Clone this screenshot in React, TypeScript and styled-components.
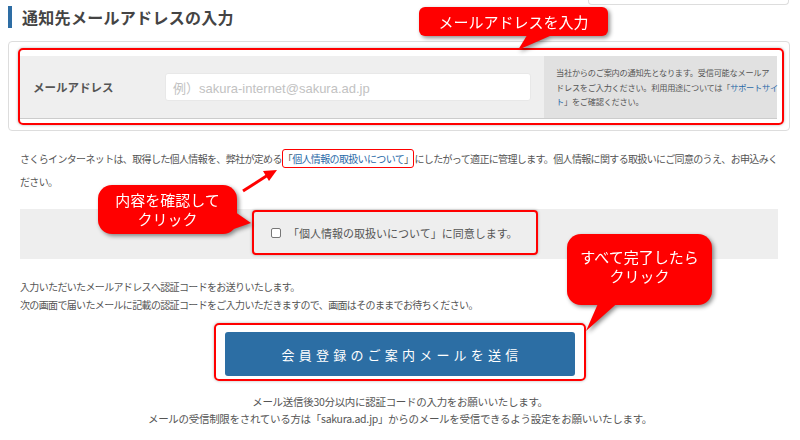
import styled, { createGlobalStyle } from "styled-components";

const GlobalStyle = createGlobalStyle`
  body {
    margin: 0;
    background: #fff;
    font-family: "Noto Sans CJK JP", "Liberation Sans", sans-serif;
    color: #555;
  }
`;

const Page = styled.div`
  position: relative;
  width: 800px;
  height: 440px;
  overflow: hidden;
`;

const PrevCard = styled.div`
  margin-left: 588px;
  width: 201px;
  height: 5px;
  box-sizing: border-box;
  border: 1px solid #ddd;
  border-top: none;
  border-radius: 0 0 4px 4px;
`;

const TitleRow = styled.div`
  display: flex;
  align-items: center;
  height: 22px;
  margin: 1px 0 0 8px;
`;

const TitleBar = styled.div`
  width: 4px;
  height: 22px;
  background: #2e6da4;
`;

const Title = styled.h2`
  margin: 0 0 0 10px;
  font-size: 16px;
  font-weight: 700;
  letter-spacing: 0.3px;
  color: #444;
`;

const FormCard = styled.div`
  margin: 13px 10px 0 8px;
  border: 1px solid #ddd;
  border-radius: 4px;
  padding: 6px 5px 5px 9px;
`;

const Highlight = styled.div`
  border: 2px solid #f00;
  border-radius: 5px;
  box-shadow: 0 0 3px rgba(0, 0, 0, 0.3);
`;

const FormHighlight = styled(Highlight)`
  padding: 6px 5px 4px 0;
`;

const FieldRow = styled.div`
  display: flex;
  height: 63px;
  box-sizing: border-box;
  background: #efefef;
  border-bottom: 1px solid #ccc;
`;

const FieldLabel = styled.div`
  flex: 0 0 145px;
  box-sizing: border-box;
  padding-left: 13px;
  display: flex;
  align-items: center;
  font-size: 11.5px;
  font-weight: 700;
  color: #555;
`;

const FieldInput = styled.div`
  flex: 0 0 auto;
  display: flex;
  align-items: center;
  margin-right: 13px;
`;

const InputBox = styled.div`
  width: 366px;
  height: 28px;
  box-sizing: border-box;
  background: #fff;
  border-radius: 3px;
  border: 1px solid #e8e8e8;
  padding-left: 7px;
  display: flex;
  align-items: center;
  font-family: "Liberation Sans", "Noto Sans CJK JP", sans-serif;
  font-size: 13px;
  color: #c2c2c2;
`;

const NoteCell = styled.div`
  flex: 1;
  min-width: 0;
  background: #e1e1e1;
  padding-left: 12px;
  display: flex;
  align-items: center;
  font-size: 8.2px;
  line-height: 14.5px;
  letter-spacing: -0.25px;
  color: #555;
  white-space: nowrap;
`;

const Link = styled.span`
  color: #2a6aa8;
`;

const Paragraph = styled.p<{ $top: number; $lh: number }>`
  margin: ${p => p.$top}px 0 0 20px;
  font-size: 10px;
  letter-spacing: -0.65px;
  line-height: ${p => p.$lh}px;
  white-space: nowrap;
  color: #555;
`;

const LinkBox = styled.span`
  border: 1.5px solid #f00;
  border-radius: 3px;
  padding: 1px 0;
`;

const AgreeBand = styled.div`
  margin: 16px 22px 0 20px;
  height: 50px;
  box-sizing: border-box;
  background: #eee;
  display: flex;
  justify-content: center;
  align-items: flex-start;
  padding: 1px 8px 0 0;
`;

const AgreeBox = styled(Highlight)`
  width: 286px;
  height: 45px;
  box-sizing: border-box;
  border-radius: 4px;
  display: flex;
  align-items: center;
  gap: 7px;
  padding-left: 17px;
  font-size: 11px;
  color: #555;
`;

const CheckBox = styled.span`
  width: 10px;
  height: 10px;
  box-sizing: border-box;
  border: 1px solid #777;
  border-radius: 2px;
  background: #fff;
`;

const ButtonHighlight = styled(Highlight)`
  width: 372px;
  height: 58px;
  box-sizing: border-box;
  margin: 9px auto 0 auto;
  padding: 7px 9px 3px 9px;
`;

const SendButton = styled.button`
  width: 350px;
  height: 44px;
  border: none;
  border-radius: 3px;
  background: #2c6ea4;
  color: #fff;
  font-family: "Noto Sans CJK JP", sans-serif;
  font-size: 13px;
  letter-spacing: 4.2px;
  padding: 0 0 0 4px;
  cursor: pointer;
`;

const BottomNote = styled.p`
  margin: 12px 0 0 0;
  text-align: center;
  font-size: 10.5px;
  line-height: 17px;
  letter-spacing: -0.3px;
  color: #555;
`;

const Callout = styled.div<{ $x: number; $y: number; $w: number; $h: number }>`
  position: absolute;
  left: ${p => p.$x}px;
  top: ${p => p.$y}px;
  width: ${p => p.$w}px;
  height: ${p => p.$h}px;
  filter: drop-shadow(2px 2px 2px rgba(0, 0, 0, 0.45));
  z-index: 5;
`;

const Bubble = styled.div<{ $r: number; $pt: number }>`
  position: relative;
  z-index: 1;
  width: 100%;
  height: 100%;
  box-sizing: border-box;
  background: #f00;
  border-radius: ${p => p.$r}px;
  padding-top: ${p => p.$pt}px;
  color: #fff;
  font-size: 15px;
  line-height: 19px;
  text-align: center;
  white-space: nowrap;
`;

const Tail = styled.svg`
  position: absolute;
  left: 0;
  top: 0;
  overflow: visible;
`;

const Arrow = styled.svg`
  position: absolute;
  left: 236px;
  top: 164px;
  z-index: 5;
  overflow: visible;
`;

function Speech({ x, y, w, h, r, pt, tail, children }: {
  x: number; y: number; w: number; h: number; r: number; pt: number; tail: string; children: React.ReactNode;
}) {
  return (
    <Callout $x={x} $y={y} $w={w} $h={h}>
      <Tail width={w} height={h}>
        <polygon points={tail} fill="#f00" />
      </Tail>
      <Bubble $r={r} $pt={pt}>{children}</Bubble>
    </Callout>
  );
}

export default function App() {
  return (
    <Page>
      <GlobalStyle />
      <PrevCard />
      <TitleRow>
        <TitleBar />
        <Title>通知先メールアドレスの入力</Title>
      </TitleRow>

      <FormCard>
        <FormHighlight>
          <FieldRow>
            <FieldLabel>メールアドレス</FieldLabel>
            <FieldInput>
              <InputBox>例）sakura-internet@sakura.ad.jp</InputBox>
            </FieldInput>
            <NoteCell>
              <div>
                当社からのご案内の通知先となります。受信可能なメールア<br />
                ドレスをご入力ください。利用用途については「<Link>サポートサイ</Link><br />
                <Link>ト</Link>」をご確認ください。
              </div>
            </NoteCell>
          </FieldRow>
        </FormHighlight>
      </FormCard>

      <Paragraph $top={16} $lh={23}>
        さくらインターネットは、取得した個人情報を、弊社が定める<LinkBox>「<Link>個人情報の取扱いについて</Link>」</LinkBox>にしたがって適正に管理します。個人情報に関する取扱いにご同意のうえ、お申込みく<br />
        ださい。
      </Paragraph>

      <AgreeBand>
        <AgreeBox>
          <CheckBox />
          <span>「個人情報の取扱いについて」に同意します。</span>
        </AgreeBox>
      </AgreeBand>

      <Paragraph $top={19} $lh={18}>
        入力いただいたメールアドレスへ認証コードをお送りいたします。<br />
        次の画面で届いたメールに記載の認証コードをご入力いただきますので、画面はそのままでお待ちください。
      </Paragraph>

      <ButtonHighlight>
        <SendButton>会員登録のご案内メールを送信</SendButton>
      </ButtonHighlight>

      <BottomNote>
        メール送信後30分以内に認証コードの入力をお願いいたします。<br />
        メールの受信制限をされている方は「sakura.ad.jp」からのメールを受信できるよう設定をお願いいたします。
      </BottomNote>

      <Speech x={419} y={7} w={189} h={29} r={6} pt={5} tail="110,25 140,25 99,43">
        メールアドレスを入力
      </Speech>
      <Speech x={98} y={185} w={139} h={49} r={14} pt={5} tail="130,22 130,46 153,38">
        内容を確認して<br />クリック
      </Speech>
      <Speech x={567} y={234} w={145} h={71} r={14} pt={13} tail="33,65 55,65 19,97">
        すべて完了したら<br />クリック
      </Speech>

      <Arrow width="44" height="30">
        <line x1="7" y1="27" x2="32" y2="11" stroke="#f00" strokeWidth="3" />
        <polygon points="41,6 27,7 33,17" fill="#f00" />
      </Arrow>
    </Page>
  );
}
